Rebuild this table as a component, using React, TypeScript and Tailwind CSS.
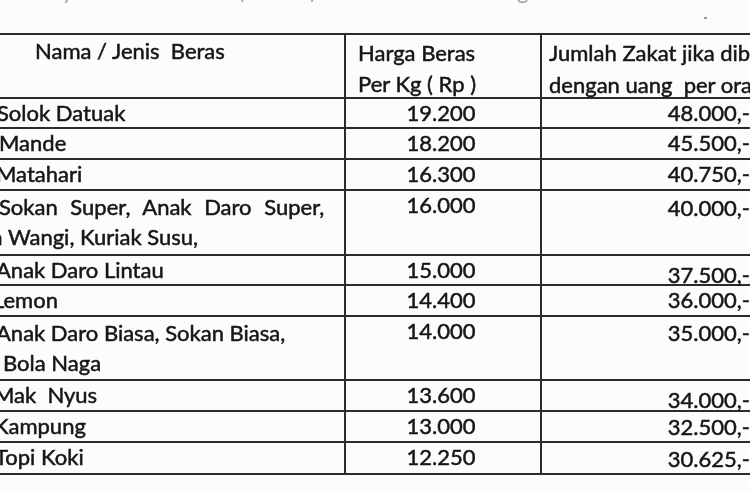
import React from "react";

type Row = {
  lines: string[];
  harga: string;
  zakat: string;
  rowCls: string;
  nameCls: string;
  zakatCls: string;
};

const rows: Row[] = [
  { lines: ["Solok Datuak"], harga: "19.200", zakat: "48.000,-", rowCls: "h-[30px]", nameCls: "pl-[11px]", zakatCls: "pt-0" },
  { lines: ["Mande"], harga: "18.200", zakat: "45.500,-", rowCls: "h-[31px]", nameCls: "pl-[13px]", zakatCls: "pt-0" },
  { lines: ["Matahari"], harga: "16.300", zakat: "40.750,-", rowCls: "h-[31px]", nameCls: "pl-[10px]", zakatCls: "pt-0" },
  { lines: ["Sokan Super, Anak Daro Super,", "Pandan Wangi, Kuriak Susu,"], harga: "16.000", zakat: "40.000,-", rowCls: "h-[65px]", nameCls: "pl-[13px]", zakatCls: "pt-[3px]" },
  { lines: ["Anak Daro Lintau"], harga: "15.000", zakat: "37.500,-", rowCls: "h-[30px]", nameCls: "pl-[10px]", zakatCls: "pt-[5px]" },
  { lines: ["Lemon"], harga: "14.400", zakat: "36.000,-", rowCls: "h-[31px]", nameCls: "pl-[7px]", zakatCls: "pt-0" },
  { lines: ["Anak Daro Biasa, Sokan Biasa,", "Bola Naga"], harga: "14.000", zakat: "35.000,-", rowCls: "h-[64px]", nameCls: "pl-[10px]", zakatCls: "pt-[2px]" },
  { lines: ["Mak  Nyus"], harga: "13.600", zakat: "34.000,-", rowCls: "h-[31px]", nameCls: "pl-[8px]", zakatCls: "pt-[5px]" },
  { lines: ["Kampung"], harga: "13.000", zakat: "32.500,-", rowCls: "h-[31px]", nameCls: "pl-[8px]", zakatCls: "pt-[1px]" },
  { lines: ["Topi Koki"], harga: "12.250", zakat: "30.625,-", rowCls: "h-[32px]", nameCls: "pl-[9px]", zakatCls: "pt-[2px]" },
];

export default function App() {
  return (
    <div
      className="relative w-[750px] h-[493px] overflow-hidden bg-[#fcfcfc] text-[#161616] blur-[0.35px] [-webkit-text-stroke:0.5px_#161616]"
      style={{ fontFamily: "Lato, 'Open Sans', sans-serif" }}
    >
      {/* caption above the table, cut off by the scan */}
      <div className="h-[33px] overflow-hidden">
        <p className="-mt-[24px] flex whitespace-nowrap text-[22px] leading-[30px] text-[#a0a0a0] [-webkit-text-stroke:0px]">
          <span className="ml-[62px]">y</span>
          <span className="ml-[165px]">(</span>
          <span className="ml-[66px]">)</span>
          <span className="ml-[170px]">harga berikut</span>
        </p>
      </div>
      <span className="absolute left-[704px] top-[17px] h-[2px] w-[3px] bg-[#9a9a9a]" />

      <div className="-ml-[14px] text-[22px]">
        {/* header */}
        <div className="grid h-[66px] grid-cols-[360px_196px_220px] border-y-2 border-[#2b2b2b]">
          <div className="border-r-2 border-[#2b2b2b] pl-[49px] pt-[1px] leading-[30px]">
            Nama / Jenis&nbsp; Beras
          </div>
          <div className="border-r-2 border-[#2b2b2b] pl-[12px] pt-[2px] leading-[31px] whitespace-nowrap">
            <div>Harga Beras</div>
            <div>Per Kg ( Rp )</div>
          </div>
          <div className="pl-[7px] pt-[2px] leading-[32px] whitespace-nowrap">
            <div>Jumlah Zakat jika dibayar</div>
            <div>dengan uang&nbsp; per orang</div>
          </div>
        </div>

        {rows.map((r) => (
          <div
            key={r.harga}
            className={`grid grid-cols-[360px_196px_220px] border-b-2 border-[#2b2b2b] ${r.rowCls}`}
          >
            <div className={`border-r-2 border-[#2b2b2b] leading-[28px] whitespace-nowrap ${r.nameCls}`}>
              {r.lines.length === 1 ? (
                <div className="whitespace-pre">{r.lines[0]}</div>
              ) : (
                <div className="pt-[1px] leading-[30px]">
                  {r.lines[0].startsWith("Sokan") ? (
                    <>
                      <div className="[word-spacing:7px]">{r.lines[0]}</div>
                      <div className="-ml-[68px]">{r.lines[1]}</div>
                    </>
                  ) : (
                    <>
                      <div>{r.lines[0]}</div>
                      <div className="pl-[7px]">{r.lines[1]}</div>
                    </>
                  )}
                </div>
              )}
            </div>
            <div className="border-r-2 border-[#2b2b2b] text-center leading-[28px] pr-[4px]">
              {r.harga}
            </div>
            <div className={`text-right leading-[28px] pr-[12px] ${r.zakatCls}`}>{r.zakat}</div>
          </div>
        ))}
      </div>
    </div>
  );
}
